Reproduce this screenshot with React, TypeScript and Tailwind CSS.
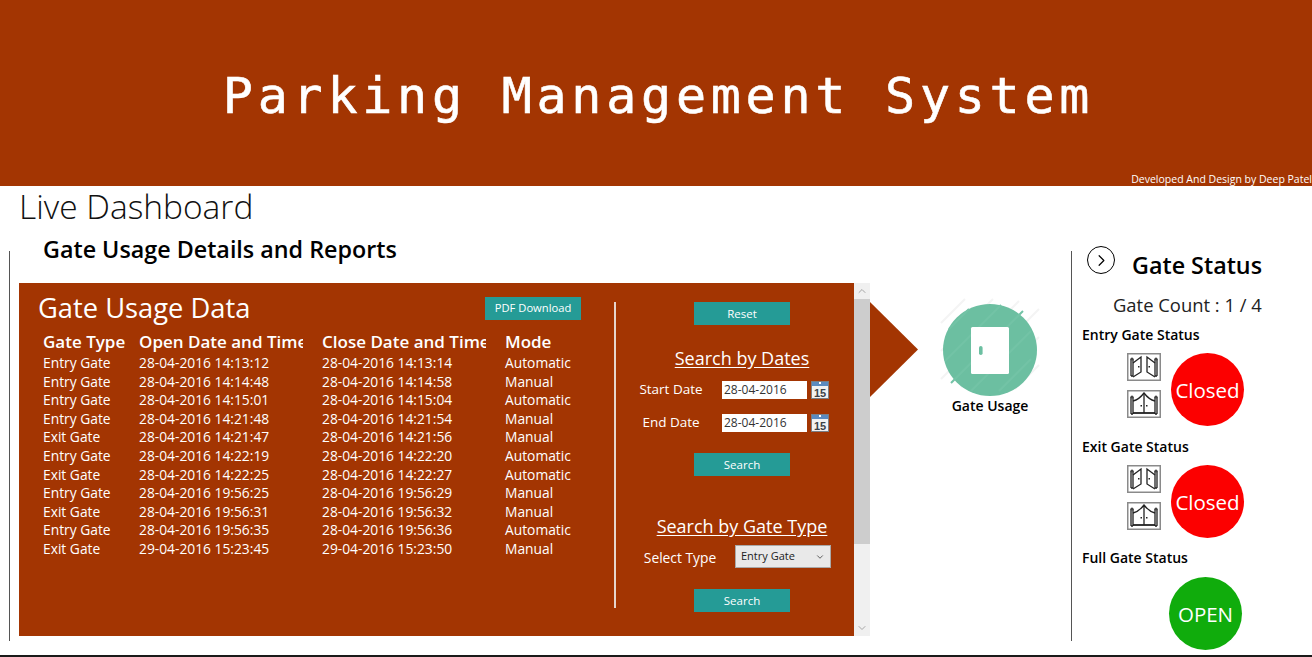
import React from 'react';
import { ChevronUp, ChevronDown, ChevronRight } from 'lucide-react';

const rows = [
  ['Entry Gate', '28-04-2016 14:13:12', '28-04-2016 14:13:14', 'Automatic'],
  ['Entry Gate', '28-04-2016 14:14:48', '28-04-2016 14:14:58', 'Manual'],
  ['Entry Gate', '28-04-2016 14:15:01', '28-04-2016 14:15:04', 'Automatic'],
  ['Entry Gate', '28-04-2016 14:21:48', '28-04-2016 14:21:54', 'Manual'],
  ['Exit Gate', '28-04-2016 14:21:47', '28-04-2016 14:21:56', 'Manual'],
  ['Entry Gate', '28-04-2016 14:22:19', '28-04-2016 14:22:20', 'Automatic'],
  ['Exit Gate', '28-04-2016 14:22:25', '28-04-2016 14:22:27', 'Automatic'],
  ['Entry Gate', '28-04-2016 19:56:25', '28-04-2016 19:56:29', 'Manual'],
  ['Exit Gate', '28-04-2016 19:56:31', '28-04-2016 19:56:32', 'Manual'],
  ['Entry Gate', '28-04-2016 19:56:35', '28-04-2016 19:56:36', 'Automatic'],
  ['Exit Gate', '29-04-2016 15:23:45', '29-04-2016 15:23:50', 'Manual'],
];

const CalendarIcon = () => (
  <svg width="18" height="18" viewBox="0 0 18 18" className="shrink-0">
    <rect x="0" y="0" width="18" height="18" fill="#7a7f86" />
    <rect x="1" y="1" width="16" height="4" fill="#5b8bc0" />
    <rect x="8" y="1" width="2" height="2" fill="#ffffff" />
    <rect x="1" y="5" width="16" height="12" fill="#f2f2f2" />
    <text x="9" y="15.5" textAnchor="middle" fontSize="11" fontWeight="700" fontFamily="Liberation Sans, sans-serif" fill="#3c4248">15</text>
  </svg>
);

const GateOpenIcon = () => (
  <svg width="34" height="28" viewBox="0 0 34 28" className="block">
    <rect x="0.75" y="0.75" width="32.5" height="26.5" fill="#fff" stroke="#8a8a8a" strokeWidth="1.5" />
    <g fill="none" stroke="#222" strokeWidth="1.3">
      <path d="M4 6v17M6 6v17M4 23h2" />
      <path d="M6 10L14 4V19L6 24" />
      <path d="M28 6v17M30 6v17M28 23h2" />
      <path d="M28 10L20 4V19L28 24" />
    </g>
    <circle cx="5" cy="6" r="1.6" fill="#444" />
    <circle cx="29" cy="6" r="1.6" fill="#444" />
    <rect x="11" y="13" width="1.5" height="1.5" fill="#222" />
    <rect x="21.5" y="13" width="1.5" height="1.5" fill="#222" />
  </svg>
);

const GateClosedIcon = () => (
  <svg width="34" height="28" viewBox="0 0 34 28" className="block">
    <rect x="0.75" y="0.75" width="32.5" height="26.5" fill="#fff" stroke="#8a8a8a" strokeWidth="1.5" />
    <g fill="none" stroke="#222" strokeWidth="1.3">
      <path d="M4 7v17M6 7v17M4 24h2" />
      <path d="M28 7v17M30 7v17M28 24h2" />
      <path d="M6 11C10 10 14 7 17 3C20 7 24 10 28 11" />
      <path d="M17 3V23" />
    </g>
    <path d="M6 23H28" stroke="#222" strokeWidth="1.8" />
    <circle cx="5" cy="7" r="1.6" fill="#444" />
    <circle cx="29" cy="7" r="1.6" fill="#444" />
    <rect x="13.5" y="15" width="1.5" height="1.5" fill="#222" />
    <rect x="19" y="15" width="1.5" height="1.5" fill="#222" />
  </svg>
);

const GateUsageIcon = () => (
  <svg width="110" height="110" viewBox="0 0 110 110" className="block">
    <g stroke="#f4f4f4" strokeWidth="2">
      <path d="M6 28L30 4M6 56L58 4M6 84L84 6M26 92L104 14M54 92L104 42M80 94L104 70" />
    </g>
    <ellipse cx="55" cy="55" rx="47" ry="46" fill="#6cbfa1" />
    <g stroke="#73c3a6" strokeWidth="2">
      <path d="M14 34L34 14M10 66L66 10M16 88L88 16M36 96L96 36M64 96L96 64" />
    </g>
    <rect x="36" y="32" width="38" height="47" rx="1.5" fill="#fff" />
    <rect x="44" y="51" width="3.6" height="9" rx="1.8" fill="#6cbfa1" />
  </svg>
);

const StatusCircle = ({ label, color }: { label: string; color: string }) => (
  <div className={`flex h-[73px] w-[73px] shrink-0 items-center justify-center rounded-full pt-[2px] text-[20.5px] text-white ${color}`}>
    {label}
  </div>
);

const GateBlock = ({ title }: { title: string }) => (
  <div>
    <h3 className="ml-[10px] h-[19px] text-[14px] leading-[17px] font-semibold text-black">{title}</h3>
    <div className="mt-[8px] ml-[55px] flex h-[73px] items-start gap-[10px]">
      <div className="flex flex-col gap-[9px]">
        <GateOpenIcon />
        <GateClosedIcon />
      </div>
      <StatusCircle label="Closed" color="bg-[#fc0000]" />
    </div>
  </div>
);

const TealButton = ({ label, className = '' }: { label: string; className?: string }) => (
  <button className={`h-[23px] w-[96px] bg-[#259b96] text-[11.5px] text-white ${className}`}>{label}</button>
);

const DateRow = ({ label, className = '' }: { label: string; className?: string }) => (
  <div className={`flex h-[19px] items-center self-start ${className}`}>
    <span className="mr-[10px] w-[82px] text-center text-[13.5px] text-white">{label}</span>
    <input
      readOnly
      value="28-04-2016"
      className="h-[18px] w-[85px] bg-white pl-[2px] text-[12px] text-[#333] outline-none"
    />
    <span className="ml-[4px]"><CalendarIcon /></span>
  </div>
);

export default function App() {
  return (
    <div className="flex h-[657px] w-[1312px] flex-col overflow-hidden bg-white font-['Open_Sans',sans-serif]">
      <header className="flex h-[186px] shrink-0 flex-col bg-[#a33502]">
        <div className="flex flex-1 items-center justify-center pt-[20px] pl-[5px]">
          <h1 className="font-['DejaVu_Sans_Mono',monospace] text-[50px] leading-none tracking-[4.75px] text-white [-webkit-text-stroke:0.6px_white]">
            Parking Management System
          </h1>
        </div>
        <p className="text-right text-[10.5px] leading-[14px] text-white">Developed And Design by Deep Patel</p>
      </header>

      <div className="flex min-h-0 flex-1 flex-col">
        <h1 className="-mt-[1px] ml-[19px] h-[66px] text-[33.5px] leading-[42px] font-light text-[#111]">Live Dashboard</h1>
        <div className="flex h-[390px]">
          <section className="ml-[9px] w-[1062px] border-l border-[#555]">
            <h2 className="-mt-[18px] mb-[18px] ml-[33px] text-[23.3px] leading-[32px] font-semibold text-black">Gate Usage Details and Reports</h2>
            <div className="flex">
              <div className="flex">
                <div className="ml-[9px] flex h-[353px] w-[835px] bg-[#a33502]">
                  <div className="w-[595px] shrink-0 pt-[9px] pl-[19px]">
                    <div className="flex items-center justify-between pr-[33px]">
                      <h2 className="text-[27.3px] leading-[32px] text-white">Gate Usage Data</h2>
                      <button className="h-[23px] w-[96px] bg-[#259b96] text-[11.2px] text-white">PDF Download</button>
                    </div>
                    <div className="mt-[7px] ml-[5px] grid grid-cols-[96px_183px_183px_120px] text-[17px] leading-[22px] font-semibold text-white">
                      {['Gate Type', 'Open Date and Time', 'Close Date and Time', 'Mode'].map((h) => (
                        <span key={h} className="w-[164px] overflow-hidden whitespace-nowrap">{h}</span>
                      ))}
                    </div>
                    <div className="mt-[1px] ml-[5px]">
                      {rows.map((row, i) => (
                        <div key={i} className="grid h-[18.6px] grid-cols-[96px_183px_183px_120px] text-[13.8px] leading-[18.6px] text-white">
                          {row.map((cell, j) => (
                            <span key={j} className="whitespace-nowrap">{cell}</span>
                          ))}
                        </div>
                      ))}
                    </div>
                  </div>
                  <div className="mt-[19px] h-[306px] w-[2px] bg-[#e6d5cc]" />
                  <div className="flex flex-1 flex-col items-center pt-[19px] pl-[14px]">
                    <div className="flex w-full flex-col items-center">
                      <TealButton label="Reset" />
                      <h3 className="mt-[21px] text-[18px] leading-[24px] text-white underline underline-offset-2">Search by Dates</h3>
                      <DateRow label="Start Date" className="mt-[10px]" />
                      <DateRow label="End Date" className="mt-[14px]" />
                      <TealButton label="Search" className="mt-[21px]" />
                      <h3 className="mt-[38px] text-[18px] leading-[24px] text-white underline underline-offset-2">Search by Gate Type</h3>
                      <div className="mt-[7px] flex h-[23px] items-center self-start">
                        <span className="mr-[5px] w-[100px] pt-[3px] text-center text-[13.8px] text-white">Select Type</span>
                        <div className="flex h-[23px] w-[96px] items-center justify-between border border-[#a9a9a9] bg-[#e9e9e9] pr-[5px] pl-[5px] text-[11px] text-[#222]">
                          Entry Gate
                          <ChevronDown size={10} strokeWidth={2} className="text-[#444]" />
                        </div>
                      </div>
                      <TealButton label="Search" className="mt-[21px]" />
                    </div>
                  </div>
                </div>
                <div className="flex h-[353px] w-[16px] flex-col bg-[#f0f0f0]">
                  <div className="flex h-[16px] items-center justify-center"><ChevronUp size={12} className="text-[#a6a6a6]" /></div>
                  <div className="h-[245px] bg-[#cdcdcd]" />
                  <div className="flex-1" />
                  <div className="flex h-[16px] items-center justify-center"><ChevronDown size={12} className="text-[#a6a6a6]" /></div>
                </div>
              </div>
              <div className="flex h-[140px]">
                <svg width="48" height="95" viewBox="0 0 48 95" className="mt-[19px] block">
                  <path d="M0 0L48 47.5L0 95Z" fill="#a33502" />
                </svg>
                <div className="mt-[12px] ml-[17px] flex flex-col items-center">
                  <GateUsageIcon />
                  <span className="-mt-[8px] text-[14px] leading-[18px] font-semibold text-black">Gate Usage</span>
                </div>
              </div>
            </div>
          </section>
          <aside className="flex-1 border-l border-[#555]">
            <div className="flex h-[36px] items-start">
              <span className="mt-[-5px] ml-[15px] flex h-[28px] w-[28px] items-center justify-center rounded-full border-[1.5px] border-black">
                <ChevronRight size={19} strokeWidth={1.5} />
              </span>
              <h2 className="-mt-[1px] ml-[17px] text-[23.3px] leading-[30px] font-semibold text-black">Gate Status</h2>
            </div>
            <p className="mt-[6px] ml-[41px] text-[18.4px] leading-[24px] text-[#222]">Gate Count : 1 / 4</p>
            <div className="mt-[9px]">
              <GateBlock title="Entry Gate Status" />
            </div>
            <div className="mt-[12px]">
              <GateBlock title="Exit Gate Status" />
            </div>
            <div className="mt-[11px]">
              <h3 className="ml-[10px] h-[19px] text-[14px] leading-[17px] font-semibold text-black">Full Gate Status</h3>
              <div className="mt-[9px] ml-[97px]">
                <StatusCircle label="OPEN" color="bg-[#10ac0c]" />
              </div>
            </div>
          </aside>
        </div>
        <div className="mt-auto h-[2px] bg-[#1a1a1a]" />
      </div>
    </div>
  );
}
